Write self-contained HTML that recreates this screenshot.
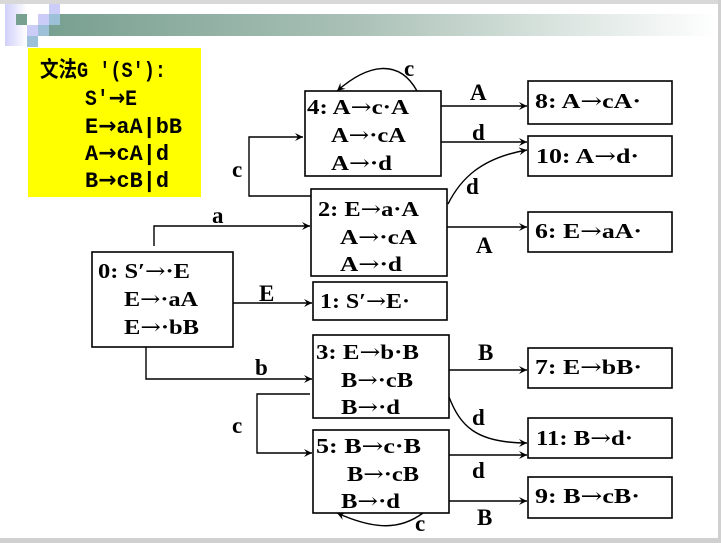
<!DOCTYPE html>
<html><head><meta charset="utf-8"><style>
html,body{margin:0;padding:0;background:#fff;}
svg{display:block;}
.t{font-family:"Liberation Serif",serif;font-weight:bold;font-size:21px;fill:#000;}
.l{font-family:"Liberation Serif",serif;font-weight:bold;font-size:23px;fill:#000;}
.y{font-family:"Liberation Mono","Noto Sans CJK SC",monospace;font-size:22px;font-weight:bold;fill:#000;}
.ar{font-family:"DejaVu Serif",serif;font-weight:normal;}
.ay{font-family:"DejaVu Sans",sans-serif;font-weight:bold;}
</style></head><body>
<svg width="721" height="543" viewBox="0 0 721 543" xmlns="http://www.w3.org/2000/svg">
<defs>
<linearGradient id="g" x1="0" x2="1"><stop offset="0" stop-color="#78a090"/><stop offset="0.45" stop-color="#a9c0b6"/><stop offset="1" stop-color="#ffffff"/></linearGradient>
<linearGradient id="lv" x1="0" x2="1"><stop offset="0" stop-color="#d0d0fa"/><stop offset="1" stop-color="#ffffff"/></linearGradient>
<marker id="a" markerWidth="10" markerHeight="10" refX="9" refY="5" orient="auto" markerUnits="userSpaceOnUse"><path d="M1,1 L9,5 L1,9 L4,5 Z" fill="#000"/></marker>
</defs>
<rect x="0" y="0" width="721" height="4" fill="#d8d8d8"/>
<rect x="0" y="538" width="721" height="5" fill="#d0d0d0"/>
<rect x="718" y="0" width="3" height="543" fill="#d0d0d0"/>
<rect x="5" y="4" width="22" height="42" fill="url(#lv)"/>
<rect x="49" y="14" width="669" height="22" fill="url(#g)"/>
<rect x="16" y="14" width="11" height="11" fill="#78a090"/>
<rect x="38" y="14" width="11" height="11" fill="#ccccf8"/>
<rect x="49" y="4" width="11" height="10" fill="#ccccf8"/>
<rect x="49" y="14" width="11" height="11" fill="#9cc0d8"/>
<rect x="38" y="25" width="11" height="11" fill="#9cc0d8"/>
<rect x="27" y="25" width="11" height="11" fill="#ccccf8"/>
<rect x="27" y="36" width="11" height="11" fill="#9cc0d8"/>
<rect x="28" y="48" width="173" height="149" fill="#ffff00"/>
<g class="y">
<text x="40" y="77" textLength="126" lengthAdjust="spacingAndGlyphs">文法G ′(S′):</text>
<text x="85" y="105" textLength="52" lengthAdjust="spacingAndGlyphs">S′<tspan class="ay">→</tspan>E</text>
<text x="85" y="133" textLength="97" lengthAdjust="spacingAndGlyphs">E<tspan class="ay">→</tspan>aA|bB</text>
<text x="85" y="160" textLength="84" lengthAdjust="spacingAndGlyphs">A<tspan class="ay">→</tspan>cA|d</text>
<text x="85" y="187" textLength="84" lengthAdjust="spacingAndGlyphs">B<tspan class="ay">→</tspan>cB|d</text>
</g>
<g fill="none" stroke="#000" stroke-width="1.6">
<rect x="305" y="91" width="136" height="85"/>
<rect x="528" y="81" width="144" height="43"/>
<rect x="528" y="136" width="144" height="40"/>
<rect x="311" y="189" width="136" height="87"/>
<rect x="528" y="212" width="144" height="40"/>
<rect x="92" y="252" width="141" height="95"/>
<rect x="313" y="282" width="134" height="38"/>
<rect x="313" y="335" width="136" height="83"/>
<rect x="528" y="348" width="144" height="40"/>
<rect x="313" y="430" width="136" height="83"/>
<rect x="528" y="418" width="144" height="40"/>
<rect x="528" y="477" width="144" height="41"/>
</g>
<g fill="none" stroke="#000" stroke-width="1.4" marker-end="url(#a)">
<path d="M417,91 C400,60 370,62 337,91"/>
<path d="M441,106 L527,106"/>
<path d="M441,142 L527,142"/>
<path d="M311,196 L249,196 L249,137 L303,137"/>
<path d="M448,204 C460,180 480,158 527,150"/>
<path d="M154,246 L154,226 L310,226"/>
<path d="M447,227 L527,227"/>
<path d="M233,303 L312,303"/>
<path d="M146,347 L146,379 L312,379"/>
<path d="M449,370 L527,370"/>
<path d="M449,397 C460,425 475,443 527,443"/>
<path d="M310,394 L257,394 L257,453 L312,453"/>
<path d="M449,455 L527,455"/>
<path d="M449,501 L527,501"/>
<path d="M423,513 C400,530 375,530 337,513"/>
</g>
<g class="t">
<text x="307" y="114" textLength="102" lengthAdjust="spacingAndGlyphs">4: A<tspan class="ar">→</tspan>c·A</text>
<text x="331" y="142" textLength="75" lengthAdjust="spacingAndGlyphs">A<tspan class="ar">→</tspan>·cA</text>
<text x="331" y="170" textLength="61" lengthAdjust="spacingAndGlyphs">A<tspan class="ar">→</tspan>·d</text>
<text x="535" y="108" textLength="106" lengthAdjust="spacingAndGlyphs">8:  A<tspan class="ar">→</tspan>cA·</text>
<text x="536" y="163" textLength="103" lengthAdjust="spacingAndGlyphs">10:  A<tspan class="ar">→</tspan>d·</text>
<text x="318" y="216" textLength="101" lengthAdjust="spacingAndGlyphs">2: E<tspan class="ar">→</tspan>a·A</text>
<text x="340" y="244" textLength="77" lengthAdjust="spacingAndGlyphs">A<tspan class="ar">→</tspan>·cA</text>
<text x="340" y="271" textLength="62" lengthAdjust="spacingAndGlyphs">A<tspan class="ar">→</tspan>·d</text>
<text x="535" y="238" textLength="107" lengthAdjust="spacingAndGlyphs">6:  E<tspan class="ar">→</tspan>aA·</text>
<text x="98" y="278" textLength="92" lengthAdjust="spacingAndGlyphs">0: S′<tspan class="ar">→</tspan>·E</text>
<text x="124" y="306" textLength="74" lengthAdjust="spacingAndGlyphs">E<tspan class="ar">→</tspan>·aA</text>
<text x="124" y="334" textLength="75" lengthAdjust="spacingAndGlyphs">E<tspan class="ar">→</tspan>·bB</text>
<text x="320" y="308" textLength="90" lengthAdjust="spacingAndGlyphs">1: S′<tspan class="ar">→</tspan>E·</text>
<text x="316" y="359" textLength="103" lengthAdjust="spacingAndGlyphs">3: E<tspan class="ar">→</tspan>b·B</text>
<text x="341" y="387" textLength="72" lengthAdjust="spacingAndGlyphs">B<tspan class="ar">→</tspan>·cB</text>
<text x="341" y="414" textLength="59" lengthAdjust="spacingAndGlyphs">B<tspan class="ar">→</tspan>·d</text>
<text x="535" y="374" textLength="107" lengthAdjust="spacingAndGlyphs">7:  E<tspan class="ar">→</tspan>bB·</text>
<text x="316" y="453" textLength="105" lengthAdjust="spacingAndGlyphs">5:  B<tspan class="ar">→</tspan>c·B</text>
<text x="347" y="481" textLength="72" lengthAdjust="spacingAndGlyphs">B<tspan class="ar">→</tspan>·cB</text>
<text x="341" y="508" textLength="59" lengthAdjust="spacingAndGlyphs">B<tspan class="ar">→</tspan>·d</text>
<text x="536" y="445" textLength="97" lengthAdjust="spacingAndGlyphs">11:  B<tspan class="ar">→</tspan>d·</text>
<text x="535" y="503" textLength="105" lengthAdjust="spacingAndGlyphs">9:  B<tspan class="ar">→</tspan>cB·</text>
</g>
<g class="l">
<text x="404" y="76">c</text>
<text x="470" y="100">A</text>
<text x="472" y="140">d</text>
<text x="232" y="177">c</text>
<text x="466" y="194">d</text>
<text x="212" y="223">a</text>
<text x="476" y="253">A</text>
<text x="259" y="301">E</text>
<text x="255" y="375">b</text>
<text x="478" y="360">B</text>
<text x="232" y="433">c</text>
<text x="472" y="425">d</text>
<text x="472" y="478">d</text>
<text x="415" y="531">c</text>
<text x="477" y="525">B</text>
</g>
</svg>
</body></html>
